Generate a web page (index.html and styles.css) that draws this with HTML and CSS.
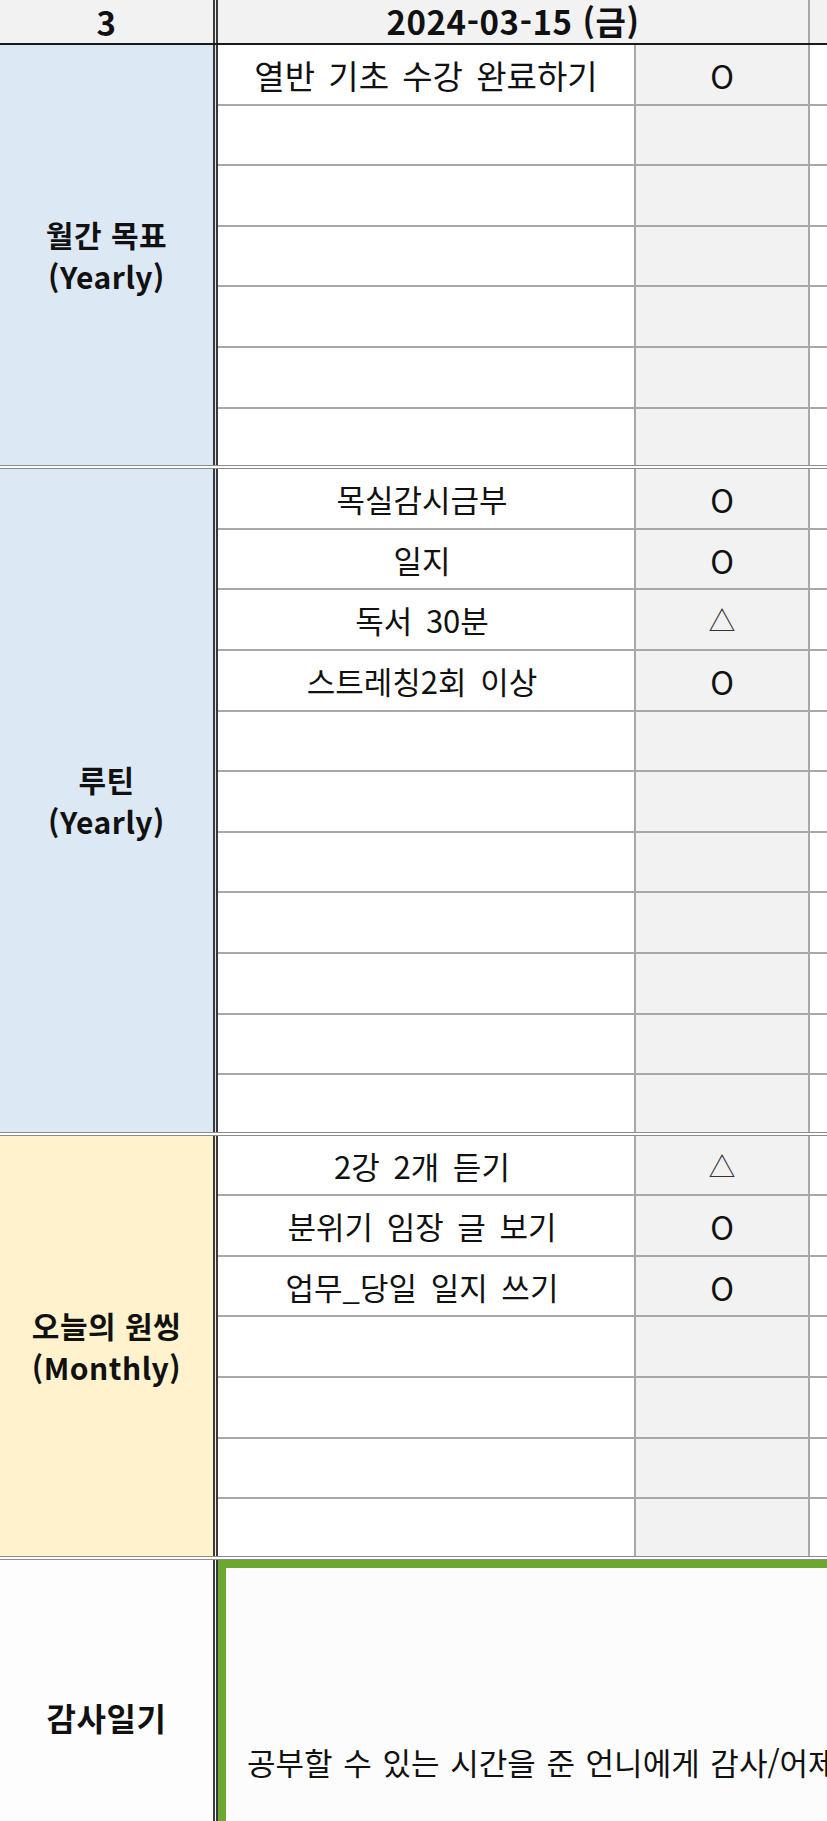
FILE: index.html
```html
<!DOCTYPE html>
<html lang="ko">
<head>
  <meta charset="UTF-8">
  <meta name="viewport" content="width=device-width, initial-scale=1.0">
  <title>일일 체크리스트</title>
  <link rel="stylesheet" href="styles.css">
</head>
<body>

<div class="sheet">

  <!-- Date header -->
  <div class="head">
    <div class="label-cell">3</div>
    <div class="date-cell">2024-03-15 (금)</div>
    <div class="edge"></div>
  </div>

  <!-- Monthly goals -->
  <section class="block blue">
    <div class="label-cell"><span>월간 목표</span><span>(Yearly)</span></div>
    <div class="rows">
      <div class="row"><div class="task big">열반 기초 수강 완료하기</div><div class="mark">O</div><div class="edge"></div></div>
      <div class="row"><div class="task"></div><div class="mark"></div><div class="edge"></div></div>
      <div class="row"><div class="task"></div><div class="mark"></div><div class="edge"></div></div>
      <div class="row"><div class="task"></div><div class="mark"></div><div class="edge"></div></div>
      <div class="row"><div class="task"></div><div class="mark"></div><div class="edge"></div></div>
      <div class="row"><div class="task"></div><div class="mark"></div><div class="edge"></div></div>
      <div class="row"><div class="task"></div><div class="mark"></div><div class="edge"></div></div>
    </div>
  </section>

  <!-- Routine -->
  <section class="block blue">
    <div class="label-cell"><span>루틴</span><span>(Yearly)</span></div>
    <div class="rows">
      <div class="row"><div class="task">목실감시금부</div><div class="mark">O</div><div class="edge"></div></div>
      <div class="row"><div class="task">일지</div><div class="mark">O</div><div class="edge"></div></div>
      <div class="row"><div class="task">독서 30분</div><div class="mark tri">△</div><div class="edge"></div></div>
      <div class="row"><div class="task">스트레칭2회 이상</div><div class="mark">O</div><div class="edge"></div></div>
      <div class="row"><div class="task"></div><div class="mark"></div><div class="edge"></div></div>
      <div class="row"><div class="task"></div><div class="mark"></div><div class="edge"></div></div>
      <div class="row"><div class="task"></div><div class="mark"></div><div class="edge"></div></div>
      <div class="row"><div class="task"></div><div class="mark"></div><div class="edge"></div></div>
      <div class="row"><div class="task"></div><div class="mark"></div><div class="edge"></div></div>
      <div class="row"><div class="task"></div><div class="mark"></div><div class="edge"></div></div>
      <div class="row"><div class="task"></div><div class="mark"></div><div class="edge"></div></div>
    </div>
  </section>

  <!-- One thing of the day -->
  <section class="block yellow">
    <div class="label-cell"><span>오늘의 원씽</span><span>(Monthly)</span></div>
    <div class="rows">
      <div class="row"><div class="task">2강 2개 듣기</div><div class="mark tri">△</div><div class="edge"></div></div>
      <div class="row"><div class="task">분위기 임장 글 보기</div><div class="mark">O</div><div class="edge"></div></div>
      <div class="row"><div class="task">업무_당일 일지 쓰기</div><div class="mark">O</div><div class="edge"></div></div>
      <div class="row"><div class="task"></div><div class="mark"></div><div class="edge"></div></div>
      <div class="row"><div class="task"></div><div class="mark"></div><div class="edge"></div></div>
      <div class="row"><div class="task"></div><div class="mark"></div><div class="edge"></div></div>
      <div class="row"><div class="task"></div><div class="mark"></div><div class="edge"></div></div>
    </div>
  </section>

  <!-- Gratitude journal -->
  <section class="thanks">
    <div class="label-cell">감사일기</div>
    <div class="note">공부할 수 있는 시간을 준 언니에게 감사/어제</div>
  </section>

</div>

</body>
</html>
```

FILE: styles.css
```css
/* Basic styles */
body {
  margin: 0;
  padding: 0;
  overflow: hidden;
  background: #fff;
  color: #111;
  font-family: "Noto Sans CJK KR", "Noto Sans", sans-serif;
}

.sheet {
  width: 827px;
}

/* Left label column, shared by every block */
.label-cell {
  width: 213px;
  flex: none;
  border-right: 5px double #3a3a3a;
  display: flex;
  flex-direction: column;
  align-items: center;
  justify-content: center;
  font-weight: 700;
  font-size: 30px;
  line-height: 42px;
  letter-spacing: 0.5px;
}

/* Date header row */
.head {
  display: flex;
  height: 43px;
  background: #f2f2f2;
  border-bottom: 2px solid #1a1a1a;
  font-size: 33px;
  font-weight: 700;
  line-height: 42px;
}

.head .label-cell {
  font-size: 33px;
  line-height: 42px;
}

.date-cell {
  width: 592px;
  box-sizing: border-box;
  border-right: 2px solid #a8a8a8;
  text-align: center;
  letter-spacing: 0.6px;
}

.head .edge {
  background: #f2f2f2;
}

/* Blocks of check rows */
.block {
  display: flex;
  border-bottom: 4px double #8c8c8c;
}

.blue .label-cell {
  background: #dde8f5;
}

.yellow .label-cell {
  background: #fff2cc;
}

.rows {
  flex: 1;
}

.row {
  display: flex;
  height: 60.6px;
  box-sizing: border-box;
  border-bottom: 2px solid #a8a8a8;
}

.row:last-child {
  height: 56.6px;
  border-bottom: none;
}

.task {
  width: 418px;
  box-sizing: border-box;
  border-right: 2px solid #a8a8a8;
  background: #fff;
  text-align: center;
  font-size: 31px;
  line-height: 60px;
  word-spacing: 5px;
  padding-right: 8px;
}

.task.big {
  font-size: 33px;
  word-spacing: 4px;
  padding-right: 0;
}

.mark {
  width: 174px;
  box-sizing: border-box;
  border-right: 2px solid #a8a8a8;
  background: #f2f2f2;
  text-align: center;
  font-size: 32px;
  line-height: 60px;
}

.mark.tri {
  font-size: 27px;
  color: #333;
}

.edge {
  flex: 1;
  background: #fff;
}

/* Gratitude journal */
.thanks {
  display: flex;
  height: 320px;
}

.thanks .label-cell {
  background: #fdfdfd;
  height: 314px;
  font-size: 32px;
}

.note {
  flex: 1;
  border-top: 8px solid #6aa832;
  border-left: 8px solid #6aa832;
  background: #fcfcfc;
  padding: 176px 0 0 21px;
  white-space: nowrap;
  overflow: hidden;
  font-size: 31px;
  line-height: 36px;
  word-spacing: 2px;
}
```
